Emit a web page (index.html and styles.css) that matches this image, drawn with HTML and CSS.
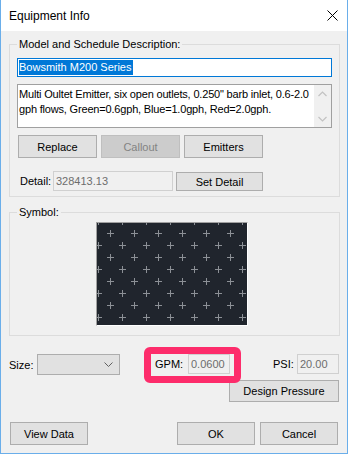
FILE: index.html
```html
<!DOCTYPE html>
<html>
<head>
<meta charset="utf-8">
<link rel="stylesheet" href="styles.css">
</head>
<body>
<div class="window">
  <div class="titlebar">
    <span class="title">Equipment Info</span>
    <svg class="close" width="11" height="11" viewBox="0 0 11 11"><path d="M0.5 0.5 L10.5 10.5 M10.5 0.5 L0.5 10.5" stroke="#000" stroke-width="1" fill="none"/></svg>
  </div>

  <div class="group group-model">
    <span class="legend">Model and Schedule Description:</span>
    <div class="textbox focused"><span class="selected">Bowsmith M200 Series</span></div>
    <div class="memo">
      <div class="memo-text">Multi Oultet Emitter, six open outlets, 0.250" barb inlet, 0.6-2.0<br>gph flows, Green=0.6gph, Blue=1.0gph, Red=2.0gph.</div>
      <div class="scrollbar">
        <svg width="9" height="6" viewBox="0 0 9 6"><path d="M0.5 5 L4.5 1 L8.5 5" stroke="#c2c2c2" stroke-width="1.2" fill="none"/></svg>
        <svg width="9" height="6" viewBox="0 0 9 6"><path d="M0.5 1 L4.5 5 L8.5 1" stroke="#c2c2c2" stroke-width="1.2" fill="none"/></svg>
      </div>
    </div>
    <div class="btn-row">
      <span class="btn">Replace</span>
      <span class="btn disabled">Callout</span>
      <span class="btn">Emitters</span>
    </div>
    <div class="detail-row">
      <span class="label detail-label">Detail:</span>
      <span class="textbox disabled detail-box">328413.13</span>
      <span class="btn set-detail">Set Detail</span>
    </div>
  </div>

  <div class="group group-symbol">
    <span class="legend">Symbol:</span>
    <div class="symbol">
      <svg width="150" height="102" viewBox="0 0 150 102">
        <defs>
          <pattern id="plus" x="7" y="4" width="24" height="24" patternUnits="userSpaceOnUse">
            <path d="M3 6.5 H10 M6.5 3 V10 M15 18.5 H22 M18.5 15 V22" stroke="#8c9096" stroke-width="1" fill="none"/>
          </pattern>
        </defs>
        <rect width="150" height="102" fill="#20252d"/>
        <rect width="150" height="102" fill="url(#plus)"/>
      </svg>
    </div>
  </div>

  <div class="row-size">
    <span class="label size-label">Size:</span>
    <span class="combo">
      <svg width="9" height="5" viewBox="0 0 9 5"><path d="M0.5 0.5 L4.5 4.5 L8.5 0.5" stroke="#606060" stroke-width="1" fill="none"/></svg>
    </span>
    <span class="gpm">
      <span class="label gpm-label">GPM:</span>
      <span class="textbox disabled small-box">0.0600</span>
    </span>
    <span class="label psi-label">PSI:</span>
    <span class="textbox disabled small-box">20.00</span>
  </div>

  <div class="row-design">
    <span class="btn design">Design Pressure</span>
  </div>

  <div class="row-bottom">
    <span class="btn wide">View Data</span>
    <span class="spacer"></span>
    <span class="btn wide">OK</span>
    <span class="btn wide">Cancel</span>
  </div>
</div>
</body>
</html>
```

FILE: styles.css
```css
* { box-sizing: border-box; }
body {
  margin: 0;
  font-family: "Liberation Sans", Arial, sans-serif;
  font-size: 11px;
  color: #000;
}
.window {
  width: 348px;
  height: 454px;
  border: 1px solid #6aaeea;
  border-top: none;
  background: #f0f0f0;
  display: flex;
  flex-direction: column;
}
.titlebar {
  height: 31px;
  flex: none;
  background: #fff;
  display: flex;
  align-items: center;
  justify-content: space-between;
  padding: 0 9px 0 8px;
}
.title {
  font-size: 12px;
  margin-top: 1px;
}
.close { display: block; }

.group {
  position: relative;
  border: 1px solid #dcdcdc;
  margin-left: 8px;
  margin-right: 7px;
  flex: none;
}
.legend {
  position: absolute;
  top: -7px;
  left: 7px;
  padding: 0 2px;
  background: #f0f0f0;
  line-height: 13px;
}
.group-model {
  margin-top: 13px;
  height: 153px;
  padding: 13px 7px 0 7px;
}
.textbox {
  display: block;
  background: #fff;
  border: 1px solid #a0a0a0;
  height: 19px;
}
.textbox.focused {
  border-color: #0078d7;
  padding: 1px 0 0 1px;
}
.selected {
  display: inline-block;
  background: #0078d7;
  color: #fff;
  height: 15px;
  line-height: 15px;
  padding-right: 1px;
}
.memo {
  margin-top: 7px;
  height: 44px;
  border: 1px solid #a0a0a0;
  background: #fff;
  display: flex;
}
.memo-text {
  flex: 1;
  min-width: 0;
  padding: 2px 0 0 1px;
  line-height: 15px;
  white-space: nowrap;
  letter-spacing: -0.18px;
}
.scrollbar {
  width: 17px;
  flex: none;
  background: #f0f0f0;
  display: flex;
  flex-direction: column;
  justify-content: space-between;
  align-items: center;
  padding: 6px 0 5px;
}
.scrollbar svg { display: block; }

.btn {
  display: flex;
  align-items: center;
  justify-content: center;
  background: #e1e1e1;
  border: 1px solid #adadad;
  height: 23px;
  flex: none;
}
.btn.disabled {
  background: #cccccc;
  border-color: #bfbfbf;
  color: #838383;
}
.btn-row {
  margin-top: 7px;
  margin-left: 1px;
  display: flex;
  gap: 4px;
}
.btn-row .btn { width: 79px; }

.detail-row {
  margin-top: 13px;
  display: flex;
  align-items: flex-start;
}
.label {
  display: flex;
  align-items: center;
  height: 20px;
  flex: none;
}
.detail-label {
  width: 36px;
  padding-left: 3px;
}
.textbox.disabled {
  background: #f0f0f0;
  border-color: #d0d0d0;
  color: #6d6d6d;
  display: flex;
  align-items: center;
  padding-left: 2px;
  height: 20px;
  flex: none;
}
.detail-box { width: 120px; }
.set-detail {
  width: 87px;
  height: 19px;
  margin-top: 1px;
  margin-left: 3px;
}

.group-symbol {
  margin-top: 15px;
  height: 124px;
  padding: 9px 0 0 86px;
}
.symbol {
  width: 152px;
  height: 104px;
  border: 1px solid #a0a0a0;
  border-right-color: #ffffff;
  border-bottom-color: #ffffff;
}
.symbol svg { display: block; }

.row-size {
  margin-top: 18px;
  display: flex;
  align-items: flex-start;
  padding-left: 8px;
}
.size-label { width: 28px; height: 21px; }
.combo {
  width: 83px;
  height: 21px;
  background: #e1e1e1;
  border: 1px solid #adadad;
  display: flex;
  align-items: center;
  justify-content: flex-end;
  padding-right: 6px;
}
.combo svg { display: block; }
.gpm {
  position: relative;
  display: flex;
  margin-left: 35px;
}
.gpm::before {
  content: "";
  position: absolute;
  top: -7px;
  bottom: -9px;
  left: -11px;
  right: -11px;
  border: 7px solid #fd2c6b;
  border-radius: 6px;
}
.gpm-label { width: 33px; }
.small-box { width: 42px; }
.psi-label { width: 24px; margin-left: 43px; }

.row-design {
  margin-top: 5px;
  display: flex;
  justify-content: flex-end;
  padding-right: 8px;
}
.design { width: 110px; height: 22px; }

.row-bottom {
  margin-top: 20px;
  display: flex;
  padding: 0 9px 0 9px;
  gap: 5px;
}
.wide { width: 78px; }
.spacer { flex: 1; }
```
